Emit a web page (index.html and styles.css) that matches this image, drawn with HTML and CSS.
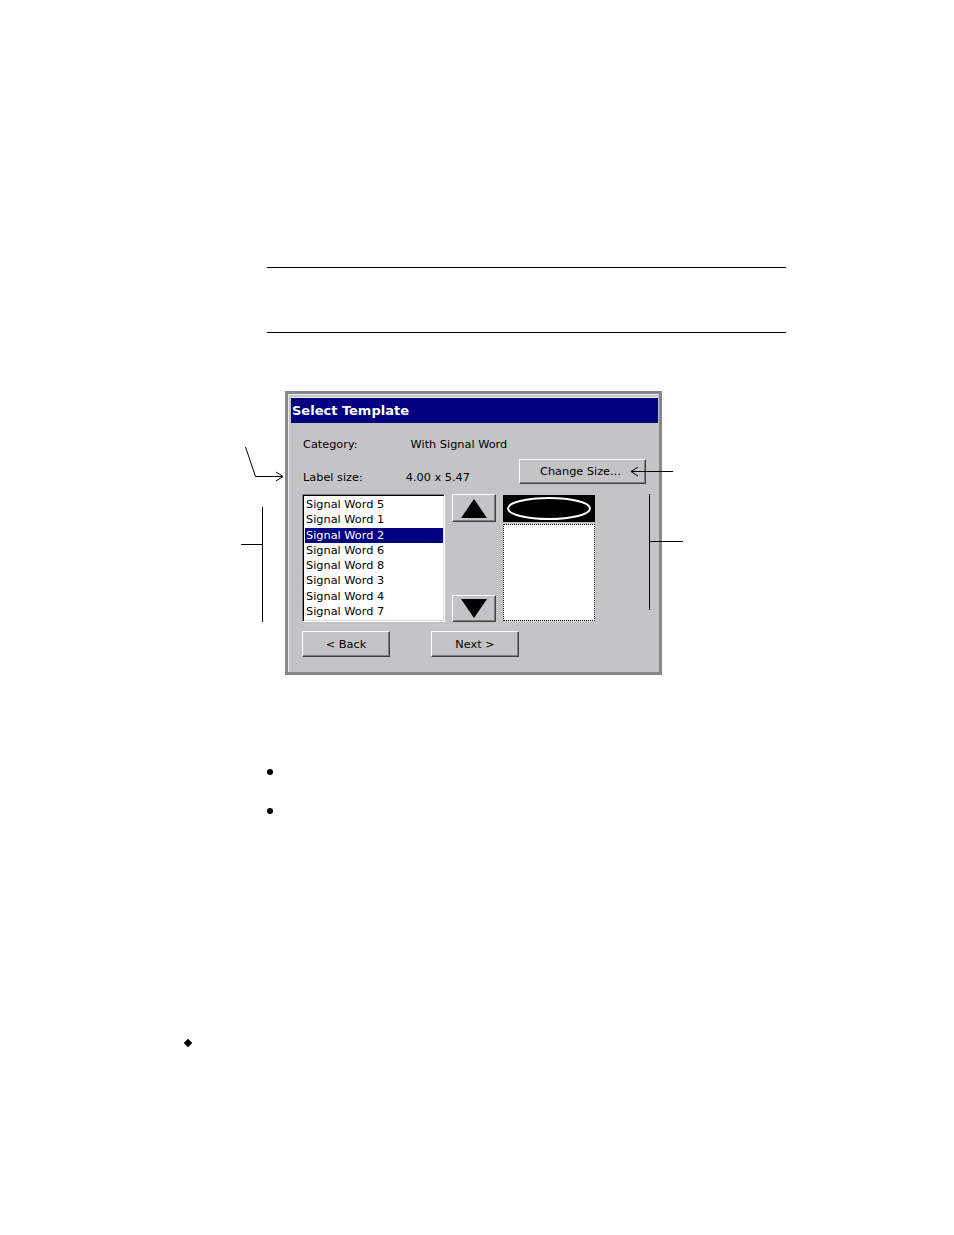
FILE: index.html
```html
<!DOCTYPE html>
<html>
<head>
<meta charset="utf-8">
<link rel="stylesheet" href="styles.css">
</head>
<body>
<div class="page">
  <div class="rule"></div>
  <div class="rule rule-second"></div>

  <div class="figure">
    <div class="dialog">
      <div class="titlebar">Select Template</div>
      <div class="dlg-body">
        <div class="row row-cat">
          <span class="lbl">Category:</span>
          <span class="val val-cat">With Signal Word</span>
        </div>
        <div class="row row-size">
          <span class="lbl">Label size:</span>
          <span class="val val-size">4.00 x 5.47</span>
          <button class="btn btn-change">Change Size...</button>
        </div>
        <div class="row row-main">
          <div class="listbox">
            <div class="item">Signal Word 5</div>
            <div class="item">Signal Word 1</div>
            <div class="item selected">Signal Word 2</div>
            <div class="item">Signal Word 6</div>
            <div class="item">Signal Word 8</div>
            <div class="item">Signal Word 3</div>
            <div class="item">Signal Word 4</div>
            <div class="item">Signal Word 7</div>
          </div>
          <div class="scroll-col">
            <div class="btn arrow-btn arrow-up">
              <svg width="28" height="20" viewBox="0 0 28 20"><polygon points="14,1 27,20 1,20" fill="#000"/></svg>
            </div>
            <div class="btn arrow-btn arrow-down">
              <svg width="28" height="20" viewBox="0 0 28 20"><polygon points="1,0 27,0 14,19" fill="#000"/></svg>
            </div>
          </div>
          <div class="preview">
            <div class="preview-top">
              <svg width="92" height="27" viewBox="0 0 92 27"><ellipse cx="46" cy="13.5" rx="41" ry="10.5" fill="#000" stroke="#fff" stroke-width="2"/></svg>
            </div>
            <div class="preview-area"></div>
          </div>
        </div>
        <div class="row row-nav">
          <button class="btn btn-nav">&lt; Back</button>
          <button class="btn btn-nav btn-next">Next &gt;</button>
        </div>
      </div>
    </div>
    <svg class="callouts" width="954" height="260" viewBox="0 0 954 260">
      <g stroke="#000" stroke-width="1" fill="none">
        <polyline points="245.5,7 255.5,36.5 283,36.5"/>
        <polyline points="276,32 283,36.5 276,41"/>
        <line x1="262.5" y1="67" x2="262.5" y2="182"/>
        <line x1="241" y1="104.5" x2="262.5" y2="104.5"/>
        <line x1="631" y1="31.5" x2="673" y2="31.5"/>
        <polyline points="638,27 631,31.5 638,36"/>
        <line x1="649.5" y1="54" x2="649.5" y2="170"/>
        <line x1="649.5" y1="101.5" x2="683" y2="101.5"/>
      </g>
    </svg>
  </div>

  <div class="bullets">
    <div class="bullet-row"><span class="dot"></span></div>
    <div class="bullet-row"><span class="dot"></span></div>
  </div>

  <div class="diamond-row"><span class="diamond"></span></div>
</div>
</body>
</html>
```
FILE: styles.css
```css
html, body {
  margin: 0;
  padding: 0;
  background: #fff;
}

.page {
  position: relative;
  width: 954px;
  min-height: 1235px;
  padding-top: 267px;
  box-sizing: border-box;
  font-family: "DejaVu Sans", sans-serif;
}

.rule {
  margin-left: 267px;
  width: 519px;
  height: 0;
  border-top: 1px solid #000;
}

.rule-second {
  margin-top: 64px;
}

.figure {
  position: relative;
  margin-top: 58px;
}

.dialog {
  margin-left: 285px;
  width: 377px;
  height: 284px;
  box-sizing: border-box;
  border: 3px solid #888888;
  background: #c4c3c5;
  box-shadow: inset 1px 1px 0 #ecebed;
  padding: 3px 1px 0 3px;
  font-size: 11.3px;
  color: #000;
}

.titlebar {
  height: 26px;
  background: #000080;
  color: #fff;
  font-weight: bold;
  font-size: 13px;
  line-height: 26px;
  padding-left: 1px;
  border-top: 1px solid #e8e8f0;
  box-sizing: border-box;
}

.dlg-body {
  padding-left: 11px;
}

.row {
  display: flex;
}

.row-cat {
  margin-top: 14px;
  height: 16px;
  line-height: 16px;
}

.lbl {
  padding-left: 1px;
}

.val-cat {
  margin-left: 53px;
}

.row-size {
  margin-top: 6px;
  height: 25px;
  align-items: flex-end;
}

.row-size .lbl,
.row-size .val {
  line-height: 16px;
  margin-bottom: -2px;
}

.val-size {
  margin-left: 43px;
}

.btn {
  font-family: "DejaVu Sans", sans-serif;
  font-size: 11.3px;
  color: #000;
  background: #c4c3c5;
  box-sizing: border-box;
  border: 1px solid;
  border-color: #ffffff #404040 #404040 #ffffff;
  box-shadow: inset -1px -1px 0 #808080;
  padding: 0;
  margin: 0;
}

.btn-change {
  margin-left: auto;
  margin-right: 12px;
  width: 127px;
  height: 25px;
  text-align: left;
  padding-left: 20px;
}

.row-main {
  margin-top: 10px;
  height: 128px;
}

.listbox {
  width: 143px;
  height: 128px;
  box-sizing: border-box;
  background: #fff;
  border: 1px solid;
  border-color: #808080 #ffffff #ffffff #808080;
  box-shadow: inset 1px 1px 0 #000, inset -1px -1px 0 #dcdcdc;
  padding: 2px 1px 0 2px;
}

.item {
  height: 15.3px;
  line-height: 15.3px;
  padding-left: 1px;
  white-space: nowrap;
}

.item.selected {
  background: #000080;
  color: #fff;
}

.scroll-col {
  margin-left: 7px;
  width: 44px;
  display: flex;
  flex-direction: column;
  justify-content: space-between;
}

.arrow-btn {
  display: flex;
  align-items: center;
  justify-content: center;
}

.arrow-up {
  height: 28px;
}

.arrow-down {
  height: 27px;
}

.arrow-btn svg {
  display: block;
}

.preview {
  margin-left: 7px;
  width: 92px;
  display: flex;
  flex-direction: column;
}

.preview-top {
  margin-top: 1px;
  height: 27px;
  background: #000;
}

.preview-top svg {
  display: block;
}

.preview-area {
  margin-top: 2px;
  height: 97px;
  box-sizing: border-box;
  background: #fff;
  border: 1px dotted #000;
}

.row-nav {
  margin-top: 9px;
  height: 26px;
}

.btn-nav {
  width: 88px;
  height: 26px;
  text-align: center;
  padding-top: 1px;
}

.btn-next {
  margin-left: 41px;
}

.callouts {
  position: absolute;
  left: 0;
  top: 49px;
  pointer-events: none;
}

.bullets {
  margin-top: 94px;
  margin-left: 267px;
}

.bullet-row {
  height: 39px;
}

.dot {
  display: block;
  width: 6px;
  height: 6px;
  border-radius: 50%;
  background: #000;
}

.diamond-row {
  margin-top: 193px;
  margin-left: 185px;
}

.diamond {
  display: block;
  width: 6px;
  height: 6px;
  background: #000;
  transform: rotate(45deg);
}
```
